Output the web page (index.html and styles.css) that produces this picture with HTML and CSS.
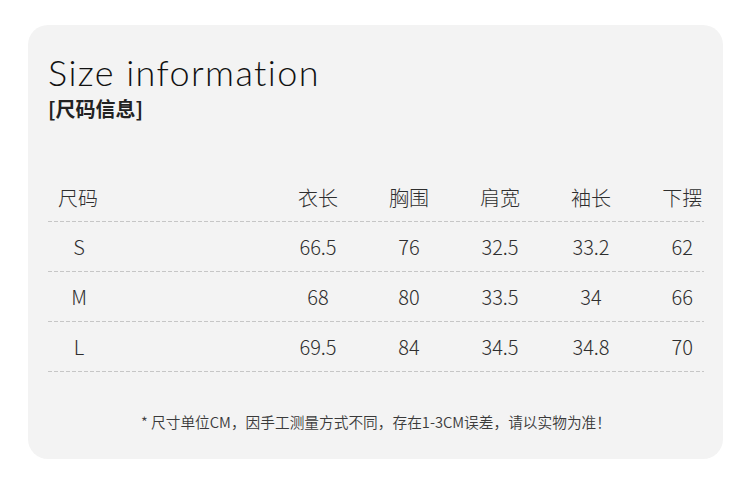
FILE: index.html
```html
<!DOCTYPE html>
<html lang="zh">
<head>
<meta charset="utf-8">
<link rel="stylesheet" href="styles.css">
</head>
<body>
<div class="card">
  <h1 class="title">Size information</h1>
  <div class="subtitle">[尺码信息]</div>
  <div class="table">
    <div class="row head">
      <div class="cell first left">尺码</div><div class="cell spacer"></div>
      <div class="cell">衣长</div><div class="cell">胸围</div><div class="cell">肩宽</div><div class="cell">袖长</div><div class="cell last">下摆</div>
    </div>
    <div class="row">
      <div class="cell first">S</div><div class="cell spacer"></div>
      <div class="cell">66.5</div><div class="cell">76</div><div class="cell">32.5</div><div class="cell">33.2</div><div class="cell last">62</div>
    </div>
    <div class="row">
      <div class="cell first">M</div><div class="cell spacer"></div>
      <div class="cell">68</div><div class="cell">80</div><div class="cell">33.5</div><div class="cell">34</div><div class="cell last">66</div>
    </div>
    <div class="row">
      <div class="cell first">L</div><div class="cell spacer"></div>
      <div class="cell">69.5</div><div class="cell">84</div><div class="cell">34.5</div><div class="cell">34.8</div><div class="cell last">70</div>
    </div>
  </div>
  <p class="note">* 尺寸单位CM，因手工测量方式不同，存在1-3CM误差，请以实物为准！</p>
</div>
</body>
</html>
```

FILE: styles.css
```css
html, body {
  margin: 0;
  padding: 0;
  background: #ffffff;
}
body {
  padding: 25px 27px 0 28px;
  font-family: "Noto Sans CJK SC", "Noto Sans", sans-serif;
  color: #333;
}
.card {
  background: #f3f3f3;
  border-radius: 20px;
  height: 434px;
  box-sizing: border-box;
  padding: 27px 19px 0 20px;
}
.title {
  margin: 0;
  font-family: "Lato", sans-serif;
  font-weight: 300;
  font-size: 36px;
  line-height: 40px;
  letter-spacing: 1.4px;
  color: #111;
}
.subtitle {
  margin-top: 5px;
  font-size: 20px;
  font-weight: 700;
  line-height: 24px;
  color: #222;
}
.table {
  margin-top: 51px;
}
.row {
  display: grid;
  grid-template-columns: 62px 162.5px 91px 91px 91px 91px 66.5px;
  height: 50px;
  align-items: center;
  background-image: linear-gradient(to right, #c6c6c6 4px, transparent 4px);
  background-size: 6px 1px;
  background-repeat: repeat-x;
  background-position: left bottom;
}
.cell {
  text-align: center;
  font-size: 20px;
  font-weight: 300;
  line-height: 24px;
  color: #2e2e2e;
  white-space: nowrap;
}
.head .cell {
  padding-top: 2px;
}
.cell.left {
  text-align: left;
  padding-left: 10px;
}
.cell.last {
  padding-left: 25px;
}
.note {
  margin: 40px 0 0;
  text-align: center;
  font-size: 14.7px;
  line-height: 20px;
  font-weight: 350;
  color: #3a3a3a;
}
```
